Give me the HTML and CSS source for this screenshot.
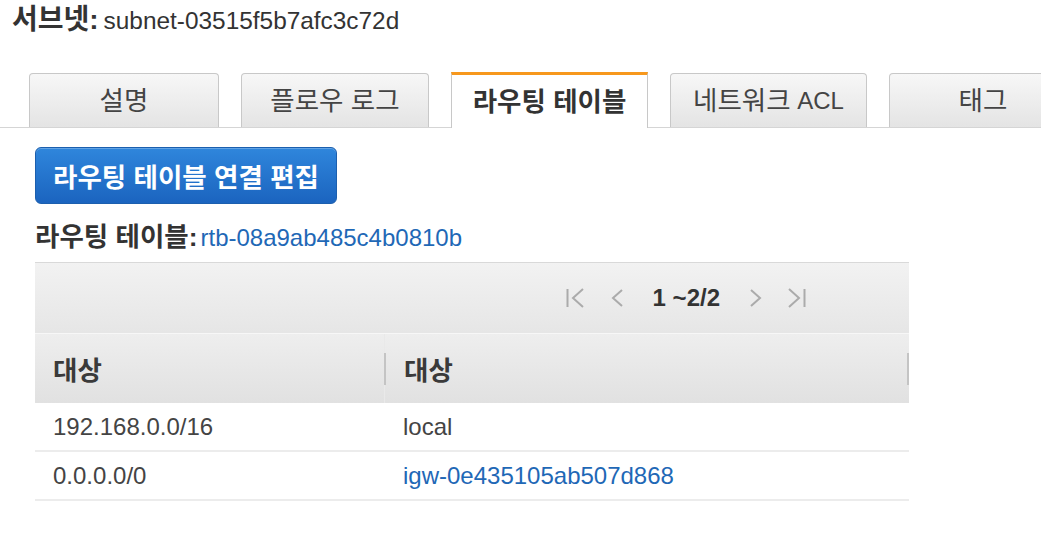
FILE: index.html
```html
<!DOCTYPE html>
<html lang="ko">
<head>
<meta charset="utf-8">
<link rel="stylesheet" href="styles.css">
</head>
<body>
<h1 class="title"><span class="title-label">서브넷:</span><span class="title-id">subnet-03515f5b7afc3c72d</span></h1>

<div class="tabs">
  <div class="tab tab-narrow">설명</div>
  <div class="tab">플로우 로그</div>
  <div class="tab tab-wide tab-active">라우팅 테이블</div>
  <div class="tab tab-wide">네트워크 <span class="latin">ACL</span></div>
  <div class="tab">태그</div>
</div>

<div class="content">
  <button class="btn-primary">라우팅 테이블 연결 편집</button>
  <div class="rt-label"><span class="rt-key">라우팅 테이블:</span><a class="link">rtb-08a9ab485c4b0810b</a></div>

  <div class="table">
    <div class="toolbar">
      <div class="pager">
        <svg class="pg-icon" width="19" height="22" viewBox="0 0 19 22"><line x1="1.5" y1="2" x2="1.5" y2="20"/><polyline points="17,2 7,11 17,20"/></svg>
        <svg class="pg-icon" width="12" height="22" viewBox="0 0 12 22"><polyline points="11,3 2,11 11,19"/></svg>
        <span class="pg-text">1 ~2/2</span>
        <svg class="pg-icon" width="12" height="22" viewBox="0 0 12 22"><polyline points="1,3 10,11 1,19"/></svg>
        <svg class="pg-icon" width="19" height="22" viewBox="0 0 19 22"><polyline points="2,2 12,11 2,20"/><line x1="17.5" y1="2" x2="17.5" y2="20"/></svg>
      </div>
    </div>
    <div class="thead">
      <div class="th th-first">대상</div>
      <div class="th th-second">대상</div>
    </div>
    <div class="tr">
      <div class="td td-first">192.168.0.0/16</div>
      <div class="td td-second">local</div>
    </div>
    <div class="tr">
      <div class="td td-first">0.0.0.0/0</div>
      <div class="td td-second"><a class="link">igw-0e435105ab507d868</a></div>
    </div>
  </div>
</div>
</body>
</html>
```

FILE: styles.css
```css
html, body {
  margin: 0;
  padding: 0;
  background: #fff;
  overflow: hidden;
}
body {
  font-family: "Liberation Sans", "Noto Sans CJK KR", sans-serif;
  font-size: 24px;
  color: #444;
  width: 1041px;
  height: 540px;
}
.title {
  margin: 0;
  padding: 6px 12px 0;
  height: 28px;
  display: flex;
  align-items: baseline;
  font-size: 24.4px;
  line-height: 28px;
  font-weight: normal;
  color: #333;
  white-space: nowrap;
}
.title-label {
  font-weight: bold;
  font-size: 28px;
  line-height: 28px;
  color: #333;
  margin-right: 5px;
}
.tabs {
  margin-top: 38px;
  display: flex;
  align-items: flex-end;
  gap: 22px;
  padding-left: 29px;
  border-bottom: 1px solid #d5d5d5;
  height: 55px;
}
.tab {
  flex: 0 0 auto;
  width: 188px;
  height: 54px;
  box-sizing: border-box;
  border: 1px solid #c8c8c8;
  border-bottom: none;
  border-radius: 4px 4px 0 0;
  background: linear-gradient(#f7f7f7, #e4e4e4);
  display: flex;
  align-items: center;
  justify-content: center;
  gap: 0.25em;
  color: #444;
  font-size: 26.5px;
  line-height: 30px;
}
.latin {
  font-size: 24px;
}
.tab-narrow { width: 190px; }
.tab-wide { width: 197px; }
.tab-active {
  height: 56px;
  margin-bottom: -1px;
  background: #fff;
  border-top: 3px solid #f7981d;
  border-radius: 0;
  font-weight: bold;
  color: #333;
}
.content {
  padding-left: 35px;
}
.btn-primary {
  display: block;
  margin-top: 19px;
  width: 302px;
  height: 57px;
  padding: 0;
  border: 1px solid #1c5fae;
  border-radius: 6px;
  background: linear-gradient(#2f86dc, #1b64bf);
  color: #fff;
  font-family: inherit;
  font-size: 26.5px;
  font-weight: bold;
  box-shadow: inset 0 1px 0 rgba(255,255,255,0.25);
}
.rt-label {
  margin-top: 19px;
  height: 28px;
  line-height: 28px;
  color: #333;
  display: flex;
  align-items: baseline;
}
.rt-key {
  font-weight: bold;
  font-size: 26.5px;
  color: #333;
}
.link {
  color: #1f68b6;
  text-decoration: none;
  margin-left: 3px;
}
.td .link { margin-left: 0; }
.table {
  margin-top: 11px;
  width: 874px;
}
.toolbar {
  height: 70px;
  border-top: 1px solid #d9d9d9;
  background: linear-gradient(#f2f2f2, #e6e6e6);
  display: flex;
  align-items: center;
  justify-content: flex-end;
  padding-right: 103px;
}
.pager {
  display: flex;
  align-items: center;
}
.pg-icon {
  fill: none;
  stroke: #ababab;
  stroke-width: 2;
}
.pager .pg-icon:nth-child(1) { margin-right: 26px; }
.pager .pg-icon:nth-child(2) { margin-right: 30px; }
.pager .pg-icon:nth-child(4) { margin-left: 30px; margin-right: 25px; }
.pg-text {
  font-weight: bold;
  color: #333;
  font-size: 24px;
}
.thead {
  display: flex;
  height: 69px;
  border-top: 1px solid #f7f7f7;
  background: linear-gradient(#eeeeee, #e1e1e1);
}
.th {
  position: relative;
  display: flex;
  align-items: center;
  font-weight: bold;
  font-size: 26.5px;
  color: #3a3a3a;
  box-sizing: border-box;
}
.th-first {
  width: 350px;
  padding-left: 18px;
  border-right: 1px solid #e9e9e9;
}
.th-second {
  flex: 1;
  padding-left: 19px;
}
.th::after {
  content: "";
  position: absolute;
  right: 0;
  top: 19px;
  height: 32px;
  width: 2px;
  background: #c4c4c4;
}
.th-first::after { right: -2px; }
.tr {
  display: flex;
  height: 47px;
  border-bottom: 2px solid #ececec;
  align-items: center;
}
.td {
  box-sizing: border-box;
  color: #444;
}
.td-first {
  width: 350px;
  padding-left: 18px;
}
.td-second {
  flex: 1;
  padding-left: 18px;
}
```
